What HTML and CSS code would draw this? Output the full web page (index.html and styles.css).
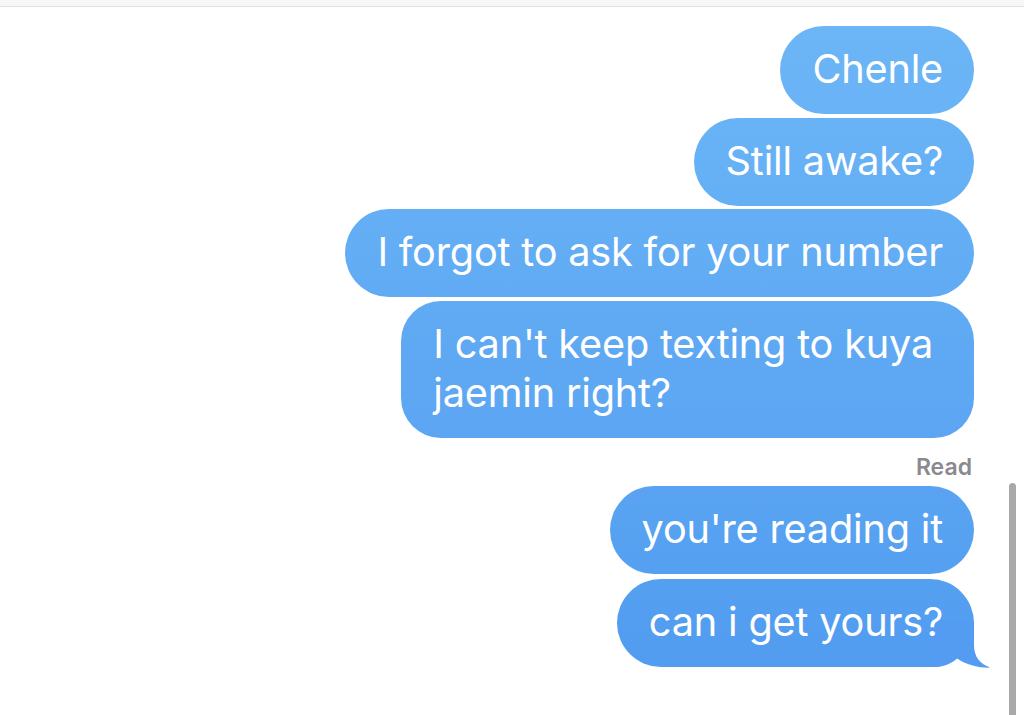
FILE: index.html
```html
<!DOCTYPE html>
<html lang="en">
<head>
<meta charset="utf-8">
<title>Messages</title>
<link rel="stylesheet" href="styles.css">
</head>
<body>
<div class="topbar"></div>
<main class="thread">
  <div class="bubble">Chenle</div>
  <div class="bubble">Still awake?</div>
  <div class="bubble">I forgot to ask for your number</div>
  <div class="bubble multi">I can't keep texting to kuya<br>jaemin right?</div>
  <div class="status">Read</div>
  <div class="bubble">you're reading it</div>
  <div class="bubble last">
    <svg class="tail" width="62" height="47" viewBox="0 0 62 47" aria-hidden="true"><path d="M0 0 H44 V24 C44 36 50 43 60.5 46.6 C52 47.3 38 45 27 37.5 C22 42 15 45.5 7 46 H0 Z"/></svg>
    <span class="text">can i get yours?</span>
  </div>
</main>
<div class="scrollbar"></div>
</body>
</html>
```
FILE: styles.css
```css
html, body {
  margin: 0;
  padding: 0;
  background: #ffffff;
  height: 715px;
  overflow: hidden;
}
body {
  font-family: Inter, "Noto Sans", "Liberation Sans", sans-serif;
  position: relative;
}
.topbar {
  height: 6px;
  background: #f6f7f8;
  border-bottom: 1px solid #dfe0e2;
}
.thread {
  display: flex;
  flex-direction: column;
  align-items: flex-end;
  padding: 19px 50px 0 0;
}
.bubble {
  position: relative;
  box-sizing: border-box;
  max-width: 640px;
  padding: 19px 31px 20px 32px;
  border-radius: 44px;
  color: #ffffff;
  font-size: 39.7px;
  line-height: 49px;
  letter-spacing: -0.2px;
  background: linear-gradient(180deg, #6db7f7 0px, #509af0 715px);
  background-attachment: fixed;
  margin-bottom: 3.5px;
}
.bubble.multi {
  border-radius: 40px;
  padding-right: 41px;
}
.status {
  margin: 12px 2px 5px 0;
  font-size: 23px;
  line-height: 28px;
  font-weight: 600;
  color: #8a8a8e;
}
.bubble.last {
  margin-top: 1px;
}
.text {
  position: relative;
  z-index: 1;
}
.tail {
  position: absolute;
  right: -18px;
  bottom: -1px;
  display: block;
  z-index: 0;
}
.tail path {
  fill: #539cf1;
}
.scrollbar {
  position: absolute;
  left: 1009px;
  top: 483px;
  width: 7px;
  height: 240px;
  border-radius: 4px;
  background: #a9a9a9;
}
```
